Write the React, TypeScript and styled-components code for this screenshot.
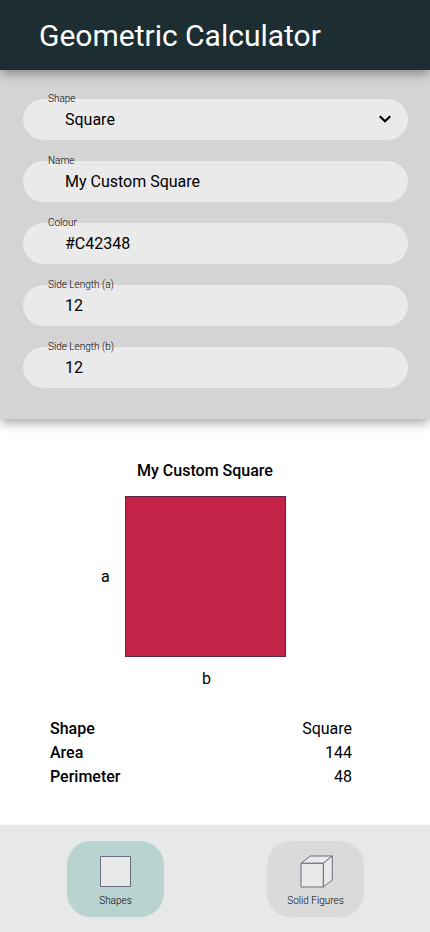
import React from "react";
import styled, { createGlobalStyle } from "styled-components";

const GlobalStyle = createGlobalStyle`
  *, *::before, *::after { box-sizing: border-box; }
  body { margin: 0; background: #fff; }
  button, input { font: inherit; color: inherit; border: 0; }
`;

const Page = styled.div`
  display: flex;
  flex-direction: column;
  height: 932px;
  width: 100%;
  overflow: hidden;
  background: #fff;
  color: #000;
  font-family: Roboto, sans-serif;
  font-size: 16px;
`;

const Header = styled.header`
  position: relative;
  z-index: 2;
  display: flex;
  align-items: center;
  flex: 0 0 70px;
  padding: 2px 39px 0;
  background: #1d2e33;
  box-shadow: 0 5px 10px -1px rgba(0, 0, 0, 0.35);
`;

const Title = styled.h1`
  margin: 0;
  color: #fff;
  font-size: 30px;
  font-weight: 400;
  line-height: 36px;
`;

const Form = styled.form`
  position: relative;
  z-index: 1;
  display: flex;
  flex-direction: column;
  flex: 0 0 349px;
  gap: 21px;
  padding: 29px 22px 0 23px;
  background: #d4d4d4;
  box-shadow: 0 5px 10px -1px rgba(0, 0, 0, 0.35);
`;

const Field = styled.label`
  position: relative;
  display: flex;
  align-items: center;
  height: 41px;
  padding: 0 17px 0 42px;
  border-radius: 21px;
  background: #eaeaea;
`;

const FieldLabel = styled.span`
  position: absolute;
  top: -6px;
  left: 25px;
  font-size: 10px;
  font-weight: 300;
  line-height: 12px;
`;

const FieldInput = styled.input`
  flex: 1;
  min-width: 0;
  height: 24px;
  padding: 0;
  outline: 0;
  background: transparent;
`;

const Chevron = styled.svg`
  flex: none;
  width: 12px;
  height: 8px;
  margin-top: -2px;
`;

const Result = styled.main`
  display: flex;
  flex-direction: column;
  flex: 1;
  padding: 40px 78px 0 50px;
`;

const Figure = styled.figure`
  display: grid;
  grid-template-columns: 51px 161px;
  margin: 0 0 0 24px;
`;

const FigureName = styled.figcaption`
  grid-column: 2;
  margin-bottom: 14px;
  padding-right: 1px;
  text-align: center;
  font-weight: 500;
  line-height: 23px;
`;

const SideA = styled.span`
  grid-column: 1;
  align-self: center;
  padding-left: 27px;
  line-height: 24px;
`;

const Square = styled.div<{ $color: string }>`
  height: 161px;
  border: 1px solid #5e2348;
  background: ${({ $color }) => $color};
`;

const SideB = styled.span`
  grid-column: 2;
  margin-top: 10px;
  padding-left: 2px;
  text-align: center;
  line-height: 24px;
`;

const Facts = styled.dl`
  display: flex;
  flex-direction: column;
  margin: 26px 0 0;
`;

const Fact = styled.div`
  display: flex;
  justify-content: space-between;
  line-height: 24px;
`;

const Term = styled.dt`
  font-weight: 500;
`;

const Value = styled.dd`
  margin: 0;
`;

const Tabs = styled.nav`
  display: flex;
  flex: 0 0 107px;
  gap: 103px;
  padding: 16px 66px 0 67px;
  background: #e8e8e8;
  box-shadow: 0 0 4px rgba(0, 0, 0, 0.06);
`;

const Tab = styled.button<{ $active?: boolean }>`
  display: flex;
  flex-direction: column;
  align-items: center;
  width: 97px;
  height: 76px;
  padding: 13px 0 0;
  border-radius: 24px;
  background: ${({ $active }) => ($active ? "#b9d3d1" : "#dadada")};
  font-size: 10px;
  font-weight: 300;
  line-height: 12px;
`;

const TabIcon = styled.svg`
  display: block;
  width: 35px;
  height: 36px;
  margin-bottom: 5px;
  fill: #e9e9e9;
  stroke: #6b6c7c;
  stroke-linejoin: round;
`;

const fields = [
  { label: "Shape", value: "Square", select: true },
  { label: "Name", value: "My Custom Square" },
  { label: "Colour", value: "#C42348" },
  { label: "Side Length (a)", value: "12" },
  { label: "Side Length (b)", value: "12" },
];

const facts = [
  ["Shape", "Square"],
  ["Area", "144"],
  ["Perimeter", "48"],
];

export default function App() {
  return (
    <Page>
      <GlobalStyle />
      <Header>
        <Title>Geometric Calculator</Title>
      </Header>
      <Form>
        {fields.map(({ label, value, select }) => (
          <Field key={label}>
            <FieldLabel>{label}</FieldLabel>
            <FieldInput defaultValue={value} readOnly={select} />
            {select && (
              <Chevron viewBox="0 0 12 8">
                <path d="M0.8 1.2 6 6.2 11.2 1.2" fill="none" stroke="#000" strokeWidth="2.2" />
              </Chevron>
            )}
          </Field>
        ))}
      </Form>
      <Result>
        <Figure>
          <FigureName>My Custom Square</FigureName>
          <SideA>a</SideA>
          <Square $color="#c42348" />
          <SideB>b</SideB>
        </Figure>
        <Facts>
          {facts.map(([term, value]) => (
            <Fact key={term}>
              <Term>{term}</Term>
              <Value>{value}</Value>
            </Fact>
          ))}
        </Facts>
      </Result>
      <Tabs>
        <Tab $active>
          <TabIcon viewBox="0 0 35 36">
            <rect x="2.5" y="2.5" width="30" height="30" />
          </TabIcon>
          Shapes
        </Tab>
        <Tab>
          <TabIcon viewBox="0 0 35 36">
            <path d="M3 9.3 12.3 2H34.3L25.3 9.3Z" />
            <path d="M25.3 9.3 34.3 2V26.2L25.3 33Z" />
            <path d="M3 9.3H25.3V33H3Z" />
          </TabIcon>
          Solid Figures
        </Tab>
      </Tabs>
    </Page>
  );
}
